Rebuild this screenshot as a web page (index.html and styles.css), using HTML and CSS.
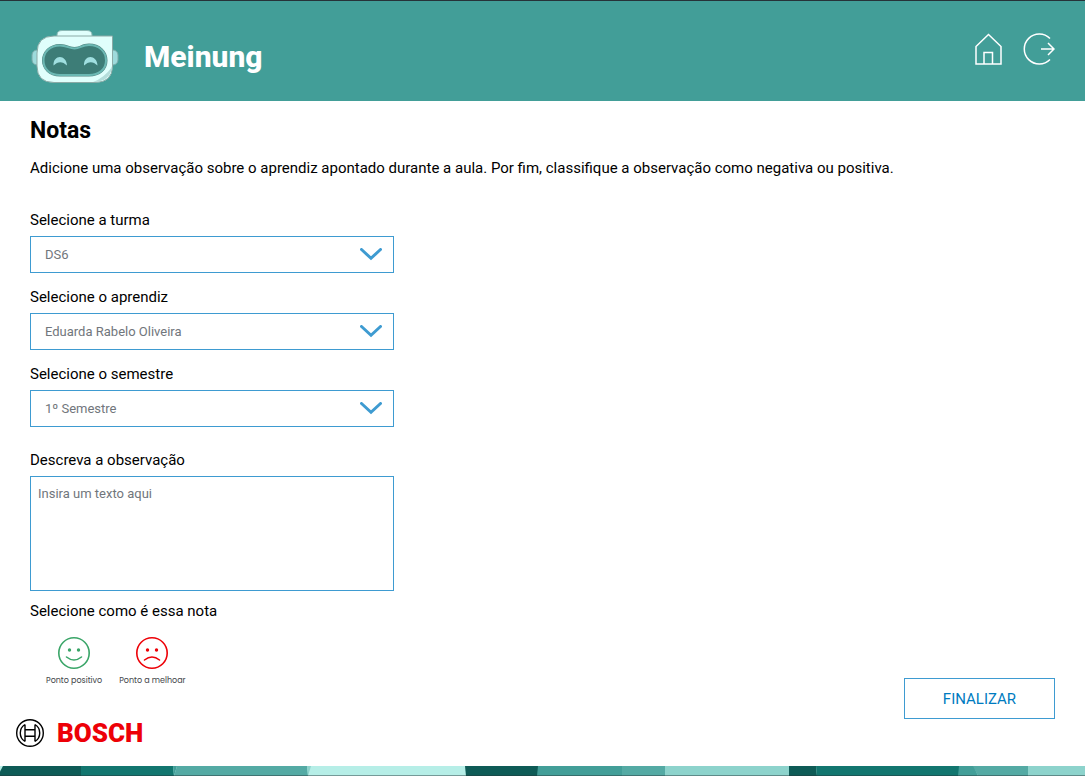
FILE: index.html
```html
<!DOCTYPE html>
<html lang="pt-BR">
<head>
<meta charset="utf-8">
<meta name="viewport" content="width=device-width, initial-scale=1">
<title>Meinung - Notas</title>
<link rel="stylesheet" href="styles.css">
</head>
<body class="page">
  <header class="header">
    <div class="header-brand">
      <svg class="robot" viewBox="0 0 88 56" aria-hidden="true">
        <rect x="1" y="21" width="12" height="15" rx="5" fill="#9ddbdc" stroke="#78aaa8"/>
        <rect x="75" y="21" width="12" height="15" rx="5" fill="#9ddbdc" stroke="#78aaa8"/>
        <path d="M26 8V6q0-4.500 5-4.500h25q5 0 5 4.500v2z" fill="#e0fffc" stroke="#8bb9b5"/>
        <path d="M23 7H81.500V37Q81.500 53.500 64 53.500H23Q6 53.500 6 37V24Q6 7 23 7Z" fill="#e0fffc" stroke="#8baaa6"/>
        <path d="M81 38Q79 53 62 53Q73 49 81 38Z" fill="#b5dedb"/>
        <path d="M29 15C36 15 38 18 43.500 18S51 14.500 58 14.500C69 14.500 76.500 22 76.500 31.500S69 47.500 58 47.500H29C18 47.500 11 40 11 31.500S18 15 29 15Z" fill="#50847f"/>
        <path d="M29 16.500C36 16.500 38 19.500 43.500 19.500S51 16 58 16C68 16 75 22.500 75 31.500S68 46 58 46H29C19 46 12.500 40 12.500 31.500S19 16.500 29 16.500Z" fill="#3d7d77" stroke="#6bb8b3" stroke-width="2"/>
        <path d="M22.500 36.500C22 25 35.500 25 36 36.500C31.500 32 27 32 22.500 36.500Z" fill="#a0dfe0"/>
        <path d="M53 36.500C52.500 25 66 25 66.500 36.500C62 32 57.500 32 53 36.500Z" fill="#a0dfe0"/>
      </svg>
      <span class="header-title">Meinung</span>
    </div>
    <nav class="header-nav" aria-label="Principal">
      <a class="nav-link" href="#inicio" aria-label="Início">
        <svg class="home-icon" viewBox="0 0 27 32"><path d="M1 13.500 13.500 1.500 26 13.500V31H1ZM9 31V19.500H17.500V31"/></svg>
      </a>
      <a class="nav-link" href="#sair" aria-label="Sair">
        <svg class="exit-icon" viewBox="0 0 32 32"><path d="M27 5.500A15 15 0 1 0 27 26.500M18 16H31M25 10 31 16 25 22"/></svg>
      </a>
    </nav>
  </header>

  <main class="content">
    <h1 class="title">Notas</h1>
    <p class="intro">Adicione uma observação sobre o aprendiz apontado durante a aula. Por fim, classifique a observação como negativa ou positiva.</p>
    <form class="form">
      <div class="fields">
        <div class="field">
          <label class="label" for="turma">Selecione a turma</label>
          <div class="select-box">
            <select class="select" id="turma"><option>DS6</option></select>
            <svg class="chevron" viewBox="0 0 22 13" aria-hidden="true"><path d="M1.500 1.500 11 10.300 20.500 1.500"/></svg>
          </div>
        </div>
        <div class="field">
          <label class="label" for="aprendiz">Selecione o aprendiz</label>
          <div class="select-box">
            <select class="select" id="aprendiz"><option>Eduarda Rabelo Oliveira</option></select>
            <svg class="chevron" viewBox="0 0 22 13" aria-hidden="true"><path d="M1.500 1.500 11 10.300 20.500 1.500"/></svg>
          </div>
        </div>
        <div class="field">
          <label class="label" for="semestre">Selecione o semestre</label>
          <div class="select-box">
            <select class="select" id="semestre"><option>1º Semestre</option></select>
            <svg class="chevron" viewBox="0 0 22 13" aria-hidden="true"><path d="M1.500 1.500 11 10.300 20.500 1.500"/></svg>
          </div>
        </div>
      </div>
      <div class="field field-note">
        <label class="label" for="observacao">Descreva a observação</label>
        <textarea class="textarea" id="observacao" placeholder="Insira um texto aqui"></textarea>
      </div>
      <div class="form-end">
        <fieldset class="rating">
          <legend class="label rating-title">Selecione como é essa nota</legend>
          <div class="choices">
            <label class="choice choice-good">
              <input class="choice-input" type="radio" name="nota" value="positivo">
              <svg class="face" viewBox="0 0 32 32" aria-hidden="true"><circle cx="16" cy="16" r="15.200"/><path d="M8.500 20Q16 26 23.500 20"/><circle class="eye" cx="11.500" cy="13" r="1.700"/><circle class="eye" cx="20.500" cy="13" r="1.700"/></svg>
              <span class="choice-text">Ponto positivo</span>
            </label>
            <label class="choice choice-bad">
              <input class="choice-input" type="radio" name="nota" value="melhorar">
              <svg class="face" viewBox="0 0 32 32" aria-hidden="true"><circle cx="16" cy="16" r="15.200"/><path d="M8.500 23Q16 17 23.500 23"/><circle class="eye" cx="11.500" cy="13" r="1.700"/><circle class="eye" cx="20.500" cy="13" r="1.700"/></svg>
              <span class="choice-text">Ponto a melhoar</span>
            </label>
          </div>
        </fieldset>
        <button class="submit" type="submit">FINALIZAR</button>
      </div>
    </form>
  </main>

  <footer class="footer">
    <div class="bosch">
      <svg class="bosch-mark" viewBox="1 1 28 28" aria-hidden="true"><circle cx="15" cy="15" r="13.300"/><path d="M10 6.500V23.500M20 6.500V23.500M10 11.800H20M10 18.200H20M10 6.500A10 10 0 0 0 10 23.500M20 6.500A10 10 0 0 1 20 23.500"/></svg>
      <span class="bosch-name">BOSCH</span>
    </div>
    <svg class="strip" viewBox="0 0 1085 11" preserveAspectRatio="none" aria-hidden="true">
      <path fill="#b6eee7" d="M0 0H1085V11H0Z"/>
      <path fill="#0e5b56" d="M3 0H82V11H0V6Z"/>
      <path fill="#12766f" d="M81 0H173L174 11H81Z"/>
      <path fill="#429e98" d="M173 0H177L174 11Z"/>
      <path fill="#54aaa4" d="M177 0H307L308 11H174Z"/>
      <path fill="#8dd3cc" d="M307 0H311L308 11Z"/>
      <path fill="#0e5b56" d="M465 0H538V11H466Z"/>
      <path fill="#429e98" d="M538 0H622V11H537Z"/>
      <path fill="#54aaa4" d="M622 0H665V11H622Z"/>
      <path fill="#8dd3cc" d="M665 0H789V11H665Z"/>
      <path fill="#0e5b56" d="M789 0H816L817 11H789Z"/>
      <path fill="#12766f" d="M816 0H959V11H817Z"/>
      <path fill="#429e98" d="M959 0H974L978 11H958Z"/>
      <path fill="#54aaa4" d="M973 0H1028V11H978Z"/>
      <path fill="#8dd3cc" d="M1028 0H1085V11H1028Z"/>
      <path fill="#263238" fill-opacity=".45" d="M0 10H1085V11H0Z"/>
    </svg>
  </footer>
</body>
</html>
```
FILE: styles.css
```css
*, *::before, *::after {
  box-sizing: border-box;
}

.page {
  margin: 0;
  min-height: 100vh;
  display: flex;
  flex-direction: column;
  background: #fff;
  color: #000;
  font-family: Roboto, "Liberation Sans", sans-serif;
  font-size: 15px;
  line-height: 20px;
}

.header {
  display: flex;
  justify-content: space-between;
  align-items: flex-start;
  padding: 28px 30px 16px 31px;
  border-top: 1px solid #263238;
  background: #429e98;
}

.header-brand {
  display: flex;
  align-items: center;
  gap: 25px;
}

.robot {
  width: 88px;
  height: 56px;
}

.header-title {
  color: #fff;
  font-size: 30px;
  font-weight: 800;
  line-height: 36px;
}

.header-nav {
  display: flex;
  align-items: center;
  gap: 21px;
  padding-top: 4px;
}

.nav-link {
  display: flex;
}

.home-icon,
.exit-icon {
  width: 27px;
  height: 32px;
  fill: none;
  stroke: #fff;
  stroke-width: 1.5;
}

.exit-icon {
  width: 32px;
}

.content {
  flex: 1;
  padding: 16px 30px 0;
}

.title {
  margin: 0 0 13px;
  font-size: 23px;
  font-weight: 700;
  line-height: 28px;
}

.intro {
  margin: 0 0 32px;
}

.fields,
.field {
  display: flex;
  flex-direction: column;
}

.fields {
  gap: 14px;
}

.field {
  max-width: 364px;
  gap: 6px;
}

.field-note {
  margin-top: 23px;
}

.select-box {
  display: grid;
  align-items: center;
}

.select,
.chevron {
  grid-area: 1 / 1;
}

.select {
  width: 100%;
  height: 37px;
  padding: 0 40px 0 14px;
  appearance: none;
  border: 1px solid #3e9bd1;
  border-radius: 0;
  background: #fff;
  color: #71767c;
  font: 13px/20px Roboto, "Liberation Sans", sans-serif;
}

.chevron {
  justify-self: end;
  width: 22px;
  height: 13px;
  margin-right: 12px;
  pointer-events: none;
  fill: none;
  stroke: #3e9bd1;
  stroke-width: 3;
  stroke-linecap: round;
}

.textarea {
  display: block;
  width: 100%;
  height: 115px;
  padding: 7px;
  resize: none;
  border: 1px solid #3e9bd1;
  border-radius: 0;
  color: #000;
  font: 13px/20px Roboto, "Liberation Sans", sans-serif;
}

.textarea::placeholder {
  color: #71767c;
}

.form-end {
  display: flex;
  justify-content: space-between;
  align-items: flex-end;
  padding-top: 10px;
}

.rating {
  min-width: 0;
  margin: 0;
  padding: 0 0 33px;
  border: 0;
}

.rating-title {
  padding: 0;
}

.choices {
  display: flex;
  gap: 17px;
  padding: 16px 0 0 16px;
}

.choice {
  position: relative;
  display: flex;
  flex-direction: column;
  align-items: center;
  gap: 7px;
  cursor: pointer;
}

.choice-input {
  position: absolute;
  inset: 0;
  width: 100%;
  height: 100%;
  margin: 0;
  opacity: 0;
}

.face {
  width: 32px;
  height: 32px;
  fill: none;
  stroke: currentColor;
  stroke-width: 1.6;
  stroke-linecap: round;
}

.eye {
  fill: currentColor;
  stroke: none;
}

.choice-good {
  color: #3aa568;
}

.choice-bad {
  color: #ed0007;
}

.choice-text {
  color: #43464a;
  font-family: Poppins, Inter, sans-serif;
  font-size: 8px;
  line-height: 10px;
}

.submit {
  width: 151px;
  height: 41px;
  border: 1px solid #3e9bd1;
  background: #fff;
  color: #007bc0;
  font: 15px/20px Roboto, "Liberation Sans", sans-serif;
}

.bosch {
  display: flex;
  align-items: center;
  gap: 13px;
  padding: 0 16px 19px;
}

.bosch-mark {
  width: 28px;
  height: 28px;
  fill: none;
  stroke: #000;
  stroke-width: 1.4;
}

.bosch-name {
  color: #ed0007;
  font-size: 26px;
  font-weight: 900;
  line-height: 28px;
}

.strip {
  display: block;
  width: 100%;
  height: 10px;
}
```
